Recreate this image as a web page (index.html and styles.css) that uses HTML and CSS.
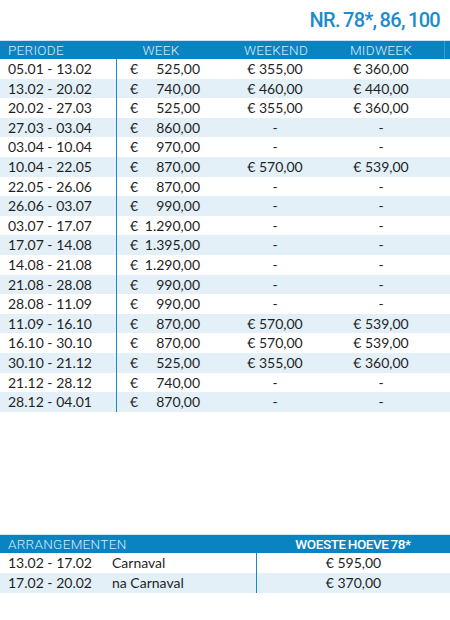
FILE: index.html
```html
<!DOCTYPE html>
<html>
<head>
<meta charset="utf-8">
<link rel="stylesheet" href="styles.css">
</head>
<body>
<div class="title">NR. 78*, 86, 100</div>

<div class="prices">
  <div class="row head">
    <div class="c per">PERIODE</div>
    <div class="c wk hc">WEEK</div>
    <div class="c we">WEEKEND</div>
    <div class="c mw">MIDWEEK</div>
    <div class="c ex"></div>
  </div>
  <div class="row"><div class="c per">05.01 - 13.02</div><div class="c wk"><span>€</span><span>525,00</span></div><div class="c we">€ 355,00</div><div class="c mw">€ 360,00</div><div class="c ex"></div></div>
  <div class="row"><div class="c per">13.02 - 20.02</div><div class="c wk"><span>€</span><span>740,00</span></div><div class="c we">€ 460,00</div><div class="c mw">€ 440,00</div><div class="c ex"></div></div>
  <div class="row"><div class="c per">20.02 - 27.03</div><div class="c wk"><span>€</span><span>525,00</span></div><div class="c we">€ 355,00</div><div class="c mw">€ 360,00</div><div class="c ex"></div></div>
  <div class="row"><div class="c per">27.03 - 03.04</div><div class="c wk"><span>€</span><span>860,00</span></div><div class="c we">-</div><div class="c mw">-</div><div class="c ex"></div></div>
  <div class="row"><div class="c per">03.04 - 10.04</div><div class="c wk"><span>€</span><span>970,00</span></div><div class="c we">-</div><div class="c mw">-</div><div class="c ex"></div></div>
  <div class="row"><div class="c per">10.04 - 22.05</div><div class="c wk"><span>€</span><span>870,00</span></div><div class="c we">€ 570,00</div><div class="c mw">€ 539,00</div><div class="c ex"></div></div>
  <div class="row"><div class="c per">22.05 - 26.06</div><div class="c wk"><span>€</span><span>870,00</span></div><div class="c we">-</div><div class="c mw">-</div><div class="c ex"></div></div>
  <div class="row"><div class="c per">26.06 - 03.07</div><div class="c wk"><span>€</span><span>990,00</span></div><div class="c we">-</div><div class="c mw">-</div><div class="c ex"></div></div>
  <div class="row"><div class="c per">03.07 - 17.07</div><div class="c wk"><span>€</span><span>1.290,00</span></div><div class="c we">-</div><div class="c mw">-</div><div class="c ex"></div></div>
  <div class="row"><div class="c per">17.07 - 14.08</div><div class="c wk"><span>€</span><span>1.395,00</span></div><div class="c we">-</div><div class="c mw">-</div><div class="c ex"></div></div>
  <div class="row"><div class="c per">14.08 - 21.08</div><div class="c wk"><span>€</span><span>1.290,00</span></div><div class="c we">-</div><div class="c mw">-</div><div class="c ex"></div></div>
  <div class="row"><div class="c per">21.08 - 28.08</div><div class="c wk"><span>€</span><span>990,00</span></div><div class="c we">-</div><div class="c mw">-</div><div class="c ex"></div></div>
  <div class="row"><div class="c per">28.08 - 11.09</div><div class="c wk"><span>€</span><span>990,00</span></div><div class="c we">-</div><div class="c mw">-</div><div class="c ex"></div></div>
  <div class="row"><div class="c per">11.09 - 16.10</div><div class="c wk"><span>€</span><span>870,00</span></div><div class="c we">€ 570,00</div><div class="c mw">€ 539,00</div><div class="c ex"></div></div>
  <div class="row"><div class="c per">16.10 - 30.10</div><div class="c wk"><span>€</span><span>870,00</span></div><div class="c we">€ 570,00</div><div class="c mw">€ 539,00</div><div class="c ex"></div></div>
  <div class="row"><div class="c per">30.10 - 21.12</div><div class="c wk"><span>€</span><span>525,00</span></div><div class="c we">€ 355,00</div><div class="c mw">€ 360,00</div><div class="c ex"></div></div>
  <div class="row"><div class="c per">21.12 - 28.12</div><div class="c wk"><span>€</span><span>740,00</span></div><div class="c we">-</div><div class="c mw">-</div><div class="c ex"></div></div>
  <div class="row"><div class="c per">28.12 - 04.01</div><div class="c wk"><span>€</span><span>870,00</span></div><div class="c we">-</div><div class="c mw">-</div><div class="c ex"></div></div>
</div>

<div class="arr">
  <div class="arow head">
    <div class="c aper">ARRANGEMENTEN</div>
    <div class="c aname"></div>
    <div class="c aprice bold">WOESTE HOEVE 78*</div>
  </div>
  <div class="arow"><div class="c aper">13.02 - 17.02</div><div class="c aname">Carnaval</div><div class="c aprice">€ 595,00</div></div>
  <div class="arow"><div class="c aper">17.02 - 20.02</div><div class="c aname">na Carnaval</div><div class="c aprice">€ 370,00</div></div>
</div>
</body>
</html>
```

FILE: styles.css
```css
html, body {
  margin: 0;
  padding: 0;
  background: #ffffff;
}
body {
  width: 450px;
  font-family: Lato, "Open Sans", sans-serif;
  font-size: 14px;
  color: #1f1f1f;
}
.title {
  height: 40px;
  box-sizing: border-box;
  padding: 8px 10px 0 0;
  text-align: right;
  font-family: Roboto, "DejaVu Sans", sans-serif;
  font-weight: 500;
  font-size: 20px;
  letter-spacing: -0.7px;
  word-spacing: -1px;
  color: #1b8bcc;
  line-height: 24px;
}
.prices {
  border-top: 1px solid #cfe4f1;
}
.row {
  display: grid;
  grid-template-columns: 116px 90px 138px 74px 1fr;
  height: 19.6px;
  line-height: 19.6px;
}
.row:nth-child(odd) {
  background: #e3f0f8;
}
.row.head {
  background: #0a83c1;
  height: 18px;
  line-height: 18px;
  color: #d6ecf8;
  font-family: Roboto, sans-serif;
  font-weight: 300;
  font-size: 13.5px;
  letter-spacing: 0.3px;
}
.row.head .ex {
  border-left: 1px solid #3a9ccf;
  margin-left: 26px;
}
.c {
  white-space: nowrap;
}
.per {
  padding-left: 8px;
}
.wk {
  border-left: 1.5px solid #1a88c6;
  display: flex;
  justify-content: space-between;
  padding: 0 6px 0 13px;
}
.row.head .wk {
  border-left: none;
  justify-content: center;
  padding: 0;
}
.we, .mw {
  text-align: center;
}
.row.head .we { padding-left: 2px; }

.arr {
  margin-top: 122px;
  border-top: 1px solid #cfe4f1;
}
.arow {
  display: grid;
  grid-template-columns: 112px 144px 1fr;
  height: 20px;
  line-height: 20px;
}
.arow:nth-child(odd) {
  background: #e3f0f8;
}
.arow.head {
  background: #0a83c1;
  height: 18px;
  line-height: 18px;
  color: #d6ecf8;
  font-family: Roboto, sans-serif;
  font-weight: 300;
  font-size: 13.5px;
  letter-spacing: 0.3px;
}
.aper {
  padding-left: 8px;
}
.aprice {
  text-align: center;
  border-left: 1.5px solid #1a88c6;
}
.arow.head .aprice {
  border-left: none;
  color: #ffffff;
  font-weight: 500;
  letter-spacing: -0.4px;
  word-spacing: -1px;
}
```
